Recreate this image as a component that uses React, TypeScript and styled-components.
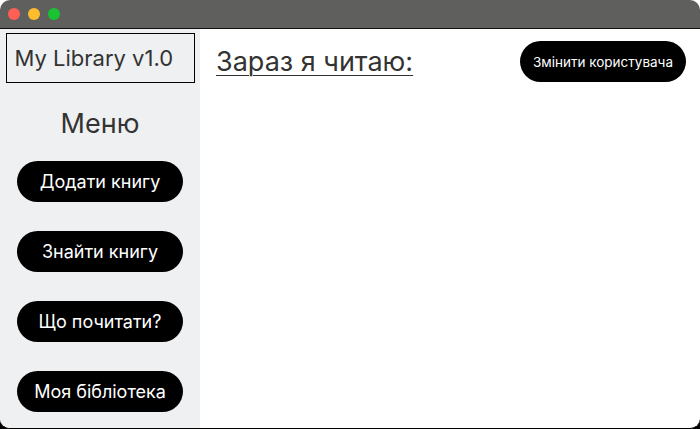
import React from "react";
import styled, {createGlobalStyle} from "styled-components";

const Global = createGlobalStyle`
  html, body {
    margin: 0;
    padding: 0;
    background: linear-gradient(to bottom, #ffffff 50%, #000000 50%);
  }
  #root {
    height: 429px;
  }
`;

const Window = styled.div`
  width: 700px;
  height: 429px;
  display: flex;
  flex-direction: column;
  border-radius: 10px;
  overflow: hidden;
  box-sizing: border-box;
  border-bottom: 1px solid #000;
  background: #fff;
  font-family: Inter, "Noto Sans", sans-serif;
`;

const TitleBar = styled.div`
  height: 28px;
  flex: none;
  background: #5f605e;
  border-bottom: 1px solid #111;
  display: flex;
  align-items: center;
  gap: 8px;
  padding-left: 8px;
`;

const Light = styled.span<{ $color: string }>`
  width: 12px;
  height: 12px;
  border-radius: 50%;
  background: ${p => p.$color};
`;

const Body = styled.div`
  flex: 1;
  display: flex;
  min-height: 0;
`;

const Sidebar = styled.aside`
  width: 200px;
  flex: none;
  background: #eff0f2;
  display: flex;
  flex-direction: column;
  align-items: center;
  padding-top: 4px;
  box-sizing: border-box;
`;

const Brand = styled.div`
  width: 189px;
  height: 50px;
  box-sizing: border-box;
  border: 1px solid #000;
  display: flex;
  align-items: center;
  padding-left: 8px;
  font-size: 22px;
  color: #333;
`;

const MenuTitle = styled.div`
  font-size: 27px;
  color: #333;
  margin-top: 24px;
  margin-bottom: 20px;
  line-height: 34px;
`;

const MenuList = styled.div`
  display: flex;
  flex-direction: column;
  gap: 29px;
`;

const Pill = styled.button<{ $w: number; $size: number }>`
  width: ${p => p.$w}px;
  height: 41px;
  border: none;
  border-radius: 21px;
  background: #000;
  color: #fff;
  font-family: Inter, "Noto Sans", sans-serif;
  font-size: ${p => p.$size}px;
  padding: 0;
  cursor: pointer;
`;

const Main = styled.main`
  flex: 1;
  display: flex;
  justify-content: space-between;
  align-items: flex-start;
  padding: 12px 14px 0 16px;
`;

const Heading = styled.h1`
  margin: 4px 0 0;
  font-size: 27px;
  font-weight: 400;
  color: #333;
  text-decoration: underline;
  text-decoration-thickness: 1px;
  text-underline-offset: 4px;
`;

const menu = ["Додати книгу", "Знайти книгу", "Що почитати?", "Моя бібліотека"];

export default function App() {
    return (
        <>
            <Global/>
            <Window>
                <TitleBar>
                    <Light $color="#fe5f57"/>
                    <Light $color="#febc2e"/>
                    <Light $color="#19c332"/>
                </TitleBar>
                <Body>
                    <Sidebar>
                        <Brand>My Library v1.0</Brand>
                        <MenuTitle>Меню</MenuTitle>
                        <MenuList>
                            {menu.map(item => (
                                <Pill key={item} $w={166} $size={18}>{item}</Pill>
                            ))}
                        </MenuList>
                    </Sidebar>
                    <Main>
                        <Heading>Зараз я читаю:</Heading>
                        <Pill $w={166} $size={13.5}>Змінити користувача</Pill>
                    </Main>
                </Body>
            </Window>
        </>
    );
}
